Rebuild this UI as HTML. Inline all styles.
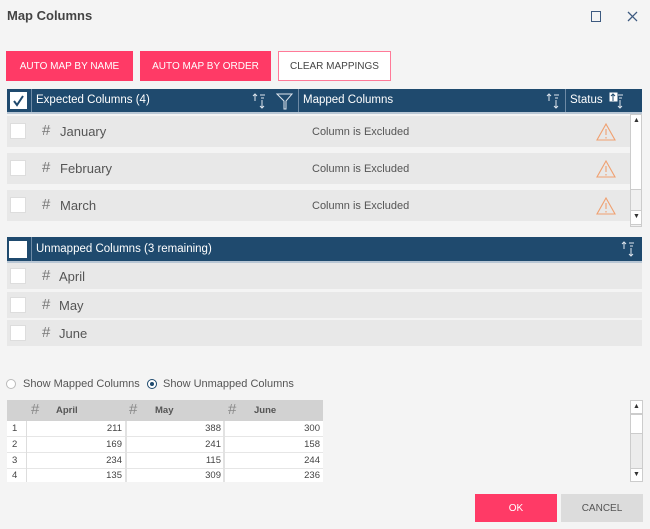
<!DOCTYPE html>
<html><head><style>
*{box-sizing:border-box;margin:0;padding:0}
body{width:650px;height:529px;background:#f4f4f4;font-family:"Liberation Sans",sans-serif;position:relative;overflow:hidden;color:#444}
.a{position:absolute}
.btn{position:absolute;top:51px;height:30px;font-size:10px;display:flex;align-items:center;justify-content:center;color:#fff;background:#ff3a66}
.hdr{position:absolute;background:#1f4a6e;color:#fff;font-size:11.5px;border-bottom:2px solid #b8c6d4}
.row{position:absolute;left:7px;background:#e8e8e8}
.cb{position:absolute;left:3px;width:16px;height:16px;background:#fff;border:1px solid #ddd}
.hash{position:absolute;font-size:15px;color:#777;font-weight:300}
.nm{position:absolute;font-size:13px;color:#555}
.ex{position:absolute;left:305px;font-size:11px;color:#555}
.tr{position:absolute;left:7px;width:316px;height:16px;font-size:9.5px;background:#fff;border-bottom:1px solid #e6e6e6}
.tr span{position:absolute;top:2px}
.sb{position:absolute;background:#fff;border:1px solid #ccc}
</style></head><body>
<div class="a" style="left:7px;top:8px;font-size:13px;font-weight:bold;color:#444">Map Columns</div>
<div class="a" style="left:591px;top:11px;width:10px;height:11px;border:1.3px solid #3d5a80"></div>
<svg class="a" style="left:627px;top:11px" width="11" height="11"><path d="M1 1L10 10M10 1L1 10" stroke="#3d5a80" stroke-width="1.3"/></svg>

<div class="btn" style="left:6px;width:127px">AUTO MAP BY NAME</div>
<div class="btn" style="left:140px;width:131px">AUTO MAP BY ORDER</div>
<div class="btn" style="left:278px;width:113px;background:#fff;color:#444;border:1px solid #ff7a98">CLEAR MAPPINGS</div>

<div class="hdr" style="left:7px;top:89px;width:635px;height:25px"></div>
<div class="a" style="left:10px;top:92px;width:17px;height:17px;background:#fff"></div>
<svg class="a" style="left:11px;top:93px" width="15" height="15"><path d="M3 8L6 12L12 3" stroke="#1f4a6e" stroke-width="2" fill="none"/></svg>
<div class="a" style="left:31px;top:89px;width:1px;height:23px;background:#6e8aa5"></div>
<div class="a" style="left:36px;top:94px;font-size:11.5px;color:#fff">Expected Columns (4)</div>
<svg class="a" style="left:251px;top:92px" width="18" height="18"><path d="M4 9V2M2 4L4 2L6 4M11 16V8M9 14L11 16L13 14M9 3H14M10 6H13" stroke="#dfe6ee" fill="none"/></svg>
<svg class="a" style="left:276px;top:92px" width="18" height="18"><path d="M1 2H16L10 9V17L8 17V9Z" stroke="#dfe6ee" fill="none"/></svg>
<div class="a" style="left:298px;top:89px;width:1px;height:23px;background:#6e8aa5"></div>
<div class="a" style="left:303px;top:94px;font-size:11.5px;color:#fff">Mapped Columns</div>
<svg class="a" style="left:545px;top:92px" width="18" height="18"><path d="M4 9V2M2 4L4 2L6 4M11 16V8M9 14L11 16L13 14M9 3H14M10 6H13" stroke="#dfe6ee" fill="none"/></svg>
<div class="a" style="left:565px;top:89px;width:1px;height:23px;background:#6e8aa5"></div>
<div class="a" style="left:570px;top:94px;font-size:11.5px;color:#fff">Status</div>
<svg class="a" style="left:609px;top:92px" width="18" height="18"><rect x="0.5" y="0.5" width="8" height="9" fill="#fff"/><path d="M4 9V2M2 4L4 2L6 4" stroke="#1f4a6e" fill="none"/><path d="M11 16V8M9 14L11 16L13 14M9 3H14M10 6H13" stroke="#dfe6ee" fill="none"/></svg>

<div class="row" style="top:116px;width:623px;height:31px"><div class="cb" style="top:7px"></div><span class="hash" style="left:35px;top:6px">#</span><span class="nm" style="left:53px;top:8px">January</span><span class="ex" style="top:10px">Column is Excluded</span></div>
<div class="row" style="top:153px;width:623px;height:31px"><div class="cb" style="top:7px"></div><span class="hash" style="left:35px;top:6px">#</span><span class="nm" style="left:53px;top:8px">February</span><span class="ex" style="top:10px">Column is Excluded</span></div>
<div class="row" style="top:190px;width:623px;height:31px"><div class="cb" style="top:7px"></div><span class="hash" style="left:35px;top:6px">#</span><span class="nm" style="left:53px;top:8px">March</span><span class="ex" style="top:10px">Column is Excluded</span></div>
<svg class="a" style="left:596px;top:123px" width="20" height="18"><path d="M10 1L19 17H1Z M10 6V12 M10 14V15.5" stroke="#f0a070" fill="none" stroke-width="1.1"/></svg>
<svg class="a" style="left:596px;top:160px" width="20" height="18"><path d="M10 1L19 17H1Z M10 6V12 M10 14V15.5" stroke="#f0a070" fill="none" stroke-width="1.1"/></svg>
<svg class="a" style="left:596px;top:197px" width="20" height="18"><path d="M10 1L19 17H1Z M10 6V12 M10 14V15.5" stroke="#f0a070" fill="none" stroke-width="1.1"/></svg>
<div class="sb" style="left:630px;top:114px;width:12px;height:113px;background:#f0f0f0"></div>
<div class="sb" style="left:630px;top:114px;width:12px;height:76px"></div>
<div class="a" style="left:633px;top:117px;font-size:7px;color:#333">▲</div>
<div class="sb" style="left:630px;top:210px;width:12px;height:15px"></div>
<div class="a" style="left:633px;top:213px;font-size:7px;color:#333">▼</div>

<div class="hdr" style="left:7px;top:237px;width:635px;height:26px"></div>
<div class="a" style="left:9px;top:241px;width:18px;height:17px;background:#fff"></div>
<div class="a" style="left:31px;top:237px;width:1px;height:24px;background:#6e8aa5"></div>
<div class="a" style="left:36px;top:243px;font-size:11.5px;color:#fff">Unmapped Columns (3 remaining)</div>
<svg class="a" style="left:620px;top:240px" width="18" height="18"><path d="M4 9V2M2 4L4 2L6 4M11 16V8M9 14L11 16L13 14M9 3H14M10 6H13" stroke="#dfe6ee" fill="none"/></svg>
<div class="row" style="top:263px;width:635px;height:26px"><div class="cb" style="top:5px"></div><span class="hash" style="left:35px;top:4px">#</span><span class="nm" style="left:52px;top:6px">April</span></div>
<div class="row" style="top:292px;width:635px;height:26px"><div class="cb" style="top:5px"></div><span class="hash" style="left:35px;top:4px">#</span><span class="nm" style="left:52px;top:6px">May</span></div>
<div class="row" style="top:320px;width:635px;height:26px"><div class="cb" style="top:5px"></div><span class="hash" style="left:35px;top:4px">#</span><span class="nm" style="left:52px;top:6px">June</span></div>

<div class="a" style="left:6px;top:379px;width:10px;height:10px;border:1px solid #bbb;border-radius:50%;background:#fff"></div>
<div class="a" style="left:23px;top:378px;font-size:11px;color:#555">Show Mapped Columns</div>
<div class="a" style="left:147px;top:379px;width:10px;height:10px;border:1px solid #1f4a6e;border-radius:50%;background:#fff"></div>
<div class="a" style="left:150px;top:382px;width:4px;height:4px;border-radius:50%;background:#1f4a6e"></div>
<div class="a" style="left:163px;top:378px;font-size:11px;color:#555">Show Unmapped Columns</div>

<div class="a" style="left:7px;top:400px;width:316px;height:21px;background:#d2d2d2;font-size:9.5px;font-weight:bold;color:#555">
<span class="a" style="left:24px;top:1px;font-size:15px;font-weight:normal;color:#888">#</span><span class="a" style="left:49px;top:5px">April</span>
<span class="a" style="left:122px;top:1px;font-size:15px;font-weight:normal;color:#888">#</span><span class="a" style="left:148px;top:5px">May</span>
<span class="a" style="left:221px;top:1px;font-size:15px;font-weight:normal;color:#888">#</span><span class="a" style="left:247px;top:5px">June</span></div>
<div class="tr" style="top:421px"><span style="left:5px">1</span><span style="right:201px">211</span><span style="right:102px">388</span><span style="right:3px">300</span></div>
<div class="tr" style="top:437px"><span style="left:5px">2</span><span style="right:201px">169</span><span style="right:102px">241</span><span style="right:3px">158</span></div>
<div class="tr" style="top:453px"><span style="left:5px">3</span><span style="right:201px">234</span><span style="right:102px">115</span><span style="right:3px">244</span></div>
<div class="tr" style="top:469px;height:13px;border:0"><span style="left:5px;top:1px">4</span><span style="right:201px;top:1px">135</span><span style="right:102px;top:1px">309</span><span style="right:3px;top:1px">236</span></div>
<div class="a" style="left:26px;top:421px;width:1px;height:61px;background:#ddd"></div>
<div class="a" style="left:125px;top:421px;width:2px;height:61px;background:#e2e2e2"></div>
<div class="a" style="left:223px;top:421px;width:2px;height:61px;background:#e2e2e2"></div>

<div class="sb" style="left:630px;top:400px;width:13px;height:82px;background:#ececec"></div>
<div class="sb" style="left:630px;top:400px;width:13px;height:14px"></div>
<div class="a" style="left:633px;top:403px;font-size:7px;color:#333">▲</div>
<div class="sb" style="left:630px;top:414px;width:13px;height:20px"></div>
<div class="sb" style="left:630px;top:468px;width:13px;height:14px"></div>
<div class="a" style="left:633px;top:471px;font-size:7px;color:#333">▼</div>

<div class="a" style="left:475px;top:494px;width:82px;height:28px;background:#ff3a66;color:#fff;font-size:10px;display:flex;align-items:center;justify-content:center">OK</div>
<div class="a" style="left:561px;top:494px;width:82px;height:28px;background:#dcdcdc;color:#555;font-size:10px;display:flex;align-items:center;justify-content:center">CANCEL</div>
</body></html>
